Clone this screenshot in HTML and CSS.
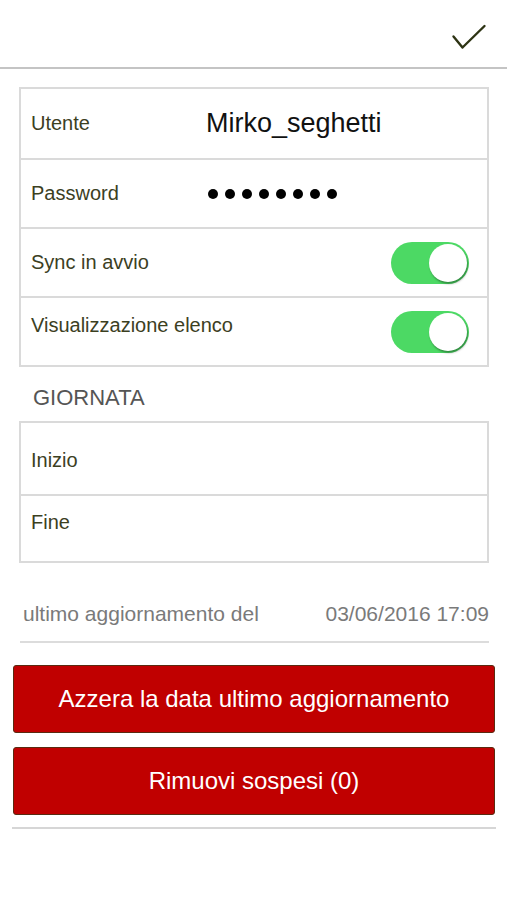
FILE: index.html
```html
<!DOCTYPE html>
<html lang="it">
<head>
  <meta charset="UTF-8" />
  <meta name="viewport" content="width=device-width, initial-scale=1" />
  <title>Impostazioni</title>
  <link rel="stylesheet" href="styles.css">
</head>
<body>
  <header class="topbar">
    <svg class="check" width="36" height="26" viewBox="0 0 36 26" fill="none">
      <path d="M2.5 12.5 L11.5 23.5 L33.5 2" stroke="#2e3414" stroke-width="2.4" stroke-linecap="round" stroke-linejoin="round"/>
    </svg>
  </header>

  <main class="settings">
    <section class="group">
      <div class="row">
        <span class="label">Utente</span>
        <span class="value">Mirko_seghetti</span>
      </div>
      <div class="row">
        <span class="label">Password</span>
        <span class="dots">
          <i></i><i></i><i></i><i></i><i></i><i></i><i></i><i></i>
        </span>
      </div>
      <div class="row">
        <span class="label wide">Sync in avvio</span>
        <span class="toggle on"><span class="knob"></span></span>
      </div>
      <div class="row">
        <span class="label wide raised">Visualizzazione elenco</span>
        <span class="toggle on"><span class="knob"></span></span>
      </div>
    </section>

    <h2 class="group-title">GIORNATA</h2>

    <section class="group">
      <div class="row tall">
        <span class="label">Inizio</span>
      </div>
      <div class="row short">
        <span class="label raised-more">Fine</span>
      </div>
    </section>

    <div class="last-update">
      <span>ultimo aggiornamento del</span>
      <span>03/06/2016 17:09</span>
    </div>

    <div class="actions">
      <button type="button" class="btn-red">Azzera la data ultimo aggiornamento</button>
      <button type="button" class="btn-red">Rimuovi sospesi (0)</button>
    </div>
    <hr class="bottom-line">
  </main>
</body>
</html>
```

FILE: styles.css
```css
* {
  box-sizing: border-box;
}

body {
  margin: 0;
  background: #fff;
  font-family: "Liberation Sans", Arial, sans-serif;
  color: #3c401f;
}

.topbar {
  height: 69px;
  border-bottom: 2px solid #c4c4c4;
  display: flex;
  justify-content: flex-end;
  align-items: center;
  padding: 6px 20px 0 0;
}

.settings {
  padding-top: 18px;
}

.group {
  margin: 0 18px 0 19px;
  border: 2px solid #dadada;
}

.row {
  height: 69px;
  display: flex;
  align-items: center;
  padding: 0 18px 0 10px;
  border-top: 2px solid #dadada;
}

.row:first-child {
  border-top: none;
  height: 69px;
}

.label {
  width: 175px;
  font-size: 20px;
  color: #3c401f;
}

.label.wide {
  flex: 1;
}

.label.raised {
  align-self: flex-start;
  margin-top: 16px;
}

.value {
  font-size: 27px;
  color: #111;
}

.dots {
  display: flex;
  gap: 7px;
  margin-left: 2px;
}

.dots i {
  width: 10px;
  height: 10px;
  border-radius: 50%;
  background: #000;
}

.toggle {
  width: 78px;
  height: 42px;
  border-radius: 21px;
  background: #e5e5e5;
  display: flex;
  align-items: center;
  padding: 2px;
}

.toggle.on {
  background: #4cd964;
  justify-content: flex-end;
}

.knob {
  width: 38px;
  height: 38px;
  border-radius: 50%;
  background: #fff;
  box-shadow: 1px 2px 2px rgba(0,0,0,0.35);
}

.group-title {
  margin: 18px 0 10px;
  padding-left: 33px;
  font-size: 22px;
  font-weight: normal;
  line-height: 26px;
  color: #555;
}

.row.tall:first-child {
  height: 71px;
  padding-top: 4px;
}

.row.short {
  height: 67px;
}

.label.raised-more {
  align-self: flex-start;
  margin-top: 15px;
}

.last-update {
  display: flex;
  justify-content: space-between;
  margin: 39px 18px 0 20px;
  padding: 0 0 15px 3px;
  border-bottom: 2px solid #dcdcdc;
  font-size: 21px;
  line-height: 24px;
  color: #7a7a7a;
}

.actions {
  display: flex;
  flex-direction: column;
  gap: 14px;
  margin: 22px 12px 0 13px;
}

.btn-red {
  height: 68px;
  border: 1px solid #5a2a10;
  border-radius: 3px;
  background: #c00000;
  color: #fff;
  font-family: "Liberation Sans", Arial, sans-serif;
  font-size: 24px;
  cursor: pointer;
}

.bottom-line {
  margin: 12px 11px 0 12px;
  border: none;
  border-top: 2px solid #d6d6d6;
}
```
